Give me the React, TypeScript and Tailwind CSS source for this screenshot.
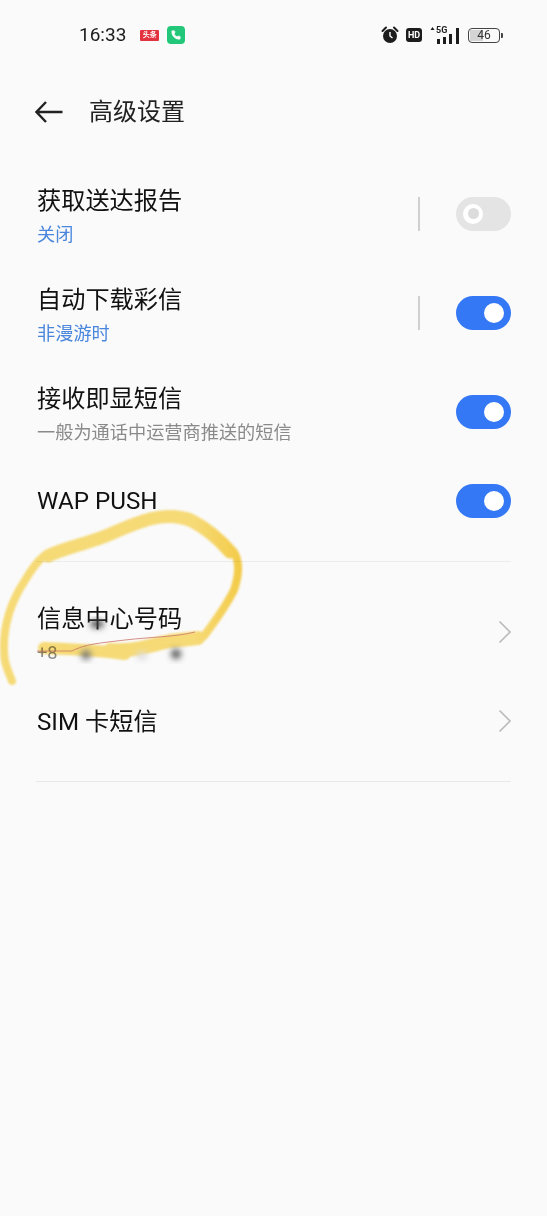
import { Phone } from 'lucide-react'

const FONT = "font-['Roboto','Noto_Sans_CJK_SC',sans-serif]"

function Toggle({ on }: { on: boolean }) {
  if (!on) {
    return (
      <div className="flex h-[34px] w-[55px] items-center rounded-full bg-[#e4e4e4] pl-[7px]">
        <div className="flex h-[20px] w-[20px] items-center justify-center rounded-full bg-white">
          <div className="h-[11px] w-[11px] rounded-full bg-[#dcdcdc]" />
        </div>
      </div>
    )
  }
  return (
    <div className="flex h-[34px] w-[55px] items-center justify-end rounded-full bg-[#3478f6] pr-[7px]">
      <div className="h-[20px] w-[20px] rounded-full bg-white" />
    </div>
  )
}

function Chevron() {
  return (
    <svg className="mb-[2px]" width="13" height="24" viewBox="0 0 13 24" fill="none">
      <path d="M1.5 1.5 L12 12 L1.5 22.5" stroke="#bcbcbc" strokeWidth="1.7" />
    </svg>
  )
}

function Row({ title, sub, subBlue, right, divider, tall = true, textPad = 'pt-[8px]' }: {
  title: string
  sub?: string
  subBlue?: boolean
  right: React.ReactNode
  divider?: boolean
  tall?: boolean
  textPad?: string
}) {
  return (
    <div className={`flex items-center pl-[37px] pr-[36px] ${tall ? 'h-[99px]' : 'h-[80px]'}`}>
      <div className={`min-w-0 flex-1 ${tall ? textPad : ''}`}>
        <div className="text-[24.2px] leading-[34px] text-[#111]">{title}</div>
        {sub && (
          <div className={`text-[18.2px] leading-[34px] ${subBlue ? 'text-[#4a86dc]' : 'text-[#8a8a8a]'}`}>{sub}</div>
        )}
      </div>
      {divider && <div className="mr-[36px] h-[34px] w-[2px] bg-[#d0d0d0]" />}
      {right}
    </div>
  )
}

function StatusBar() {
  return (
    <div className="flex h-[70px] items-center pl-[79px] pr-[44px]">
      <span className="text-[19px] text-[#1c1c1c]">16:33</span>
      <span className="ml-[14px] flex h-[11px] w-[19px] items-center justify-center rounded-[1px] bg-[#e2323f] text-[7px] font-bold leading-none text-white">头条</span>
      <span className="ml-[8px] flex h-[18px] w-[18px] items-center justify-center rounded-[4px] bg-[#22c77a]">
        <Phone size={10} fill="white" stroke="white" />
      </span>
      <div className="ml-auto flex items-center">
        <svg width="18" height="18" viewBox="0 0 18 18">
          <circle cx="9" cy="10" r="7" fill="#1c1c1c" />
          <path d="M1.5 5 L5 1.5 M16.5 5 L13 1.5" stroke="#1c1c1c" strokeWidth="2" strokeLinecap="round" />
          <path d="M9 6 V10 L11.5 12" stroke="white" strokeWidth="1.4" fill="none" />
        </svg>
        <span className="ml-[7px] flex h-[14px] w-[16px] items-center justify-center rounded-[3px] bg-[#1c1c1c] text-[9px] font-bold leading-none text-white">HD</span>
        <div className="relative ml-[8px] h-[18px] w-[29px]">
          <span className="absolute left-[6px] top-[-1px] text-[9px] font-bold leading-[10px] text-[#1c1c1c]">5G</span>
          <svg className="absolute left-0 top-0" width="29" height="18" viewBox="0 0 29 18">
            <path d="M0.5 4 L2.5 1 L4.5 4 Z" fill="#1c1c1c" />
            <rect x="7" y="13" width="3" height="5" fill="#1c1c1c" />
            <rect x="13" y="11" width="3" height="7" fill="#1c1c1c" />
            <rect x="19" y="8" width="3" height="10" fill="#1c1c1c" />
            <rect x="26" y="2" width="3" height="16" fill="#1c1c1c" />
          </svg>
        </div>
        <div className="ml-[9px] flex items-center">
          <div className="relative flex h-[15px] w-[32px] items-center justify-center overflow-hidden rounded-[4px] border border-[#444] text-[12px] leading-none text-[#333]">
            <div className="absolute inset-y-[1px] left-[1px] w-[13px] bg-[#d4d4d4]" />
            <span className="relative">46</span>
          </div>
          <div className="ml-[1px] h-[5px] w-[2px] rounded-r-[1px] bg-[#444]" />
        </div>
      </div>
    </div>
  )
}

export default function App() {
  return (
    <div className={`relative h-[1216px] w-[547px] overflow-hidden bg-[#fafafa] ${FONT}`}>
      <StatusBar />
      <div className="flex h-[84px] items-center pl-[35px]">
        <svg width="28" height="22" viewBox="0 0 28 22" fill="none">
          <path d="M27.5 11 H2 M11 1 L1.5 11 L11 21" stroke="#222" strokeWidth="2.4" />
        </svg>
        <span className="ml-[26px] text-[24px] text-[#222]">高级设置</span>
      </div>
      <div className="h-[10px]" />
      <Row title="获取送达报告" sub="关闭" subBlue divider right={<Toggle on={false} />} />
      <Row title="自动下载彩信" sub="非漫游时" subBlue divider right={<Toggle on />} />
      <Row title="接收即显短信" sub="一般为通话中运营商推送的短信" right={<Toggle on />} />
      <Row title="WAP PUSH" tall={false} right={<Toggle on />} />
      <div className="mx-[36px] mt-[20px] h-[1px] bg-[#ececec]" />
      <div className="h-[21px]" />
      <Row title="信息中心号码" sub="+8" textPad="pt-[6px]" right={<Chevron />} />
      <Row title="SIM 卡短信" tall={false} right={<Chevron />} />
      <div className="mx-[36px] mt-[19px] h-[1px] bg-[#e8e8e8]" />

      {/* hand drawn marks over the screenshot */}
      <svg className="pointer-events-none absolute left-0 top-0 mix-blend-multiply" width="547" height="1216" viewBox="0 0 547 1216">
        <defs>
          <filter id="soft"><feGaussianBlur stdDeviation="0.9" /></filter>
          <linearGradient id="ink" gradientUnits="userSpaceOnUse" x1="195" y1="0" x2="240" y2="0">
            <stop offset="0" stopColor="#fbdf78" />
            <stop offset="1" stopColor="#f8cf4a" />
          </linearGradient>
        </defs>
        <g filter="url(#soft)" fill="none" stroke="url(#ink)" strokeLinecap="round" strokeLinejoin="round">
          <path
            strokeWidth="8"
            d="M12 681 C8 670 4 664 4 650 C3 625 12 600 24 582 C30 572 36 562 44 556 C60 546 85 542 103 537 C120 530 135 522 150 518 C165 514 180 513 192 518 C208 526 222 538 234 552 C240 562 239 575 234 590 C226 606 216 620 204 636"
          />
          <path
            strokeWidth="13"
            d="M48 556 C65 548 85 544 103 537 C120 530 135 523 150 519 C165 515 180 516 192 521 C205 528 218 538 230 552"
          />
          <path strokeWidth="12" d="M44 648 C70 649 100 650 125 654" />
          <path strokeWidth="14" d="M110 650 C135 652 150 645 170 641 C180 640 190 639 198 638" />
        </g>
      </svg>
      <svg className="pointer-events-none absolute left-0 top-0" width="547" height="1216" viewBox="0 0 547 1216">
        <defs>
          <filter id="smudge"><feGaussianBlur stdDeviation="3" /></filter>
        </defs>
        <path d="M37 651 L72 651 C85 644 100 643 125 640 C150 637 175 637 195 632" stroke="#c9736a" strokeWidth="0.8" fill="none" />
        <g filter="url(#smudge)">
          <ellipse cx="97" cy="624" rx="7" ry="4" fill="#444" />
          <ellipse cx="86" cy="655" rx="5" ry="5" fill="#777" />
          <ellipse cx="142" cy="656" rx="6" ry="4" fill="#ddd" />
          <ellipse cx="176" cy="654" rx="5" ry="5" fill="#555" />
        </g>
      </svg>
    </div>
  )
}
